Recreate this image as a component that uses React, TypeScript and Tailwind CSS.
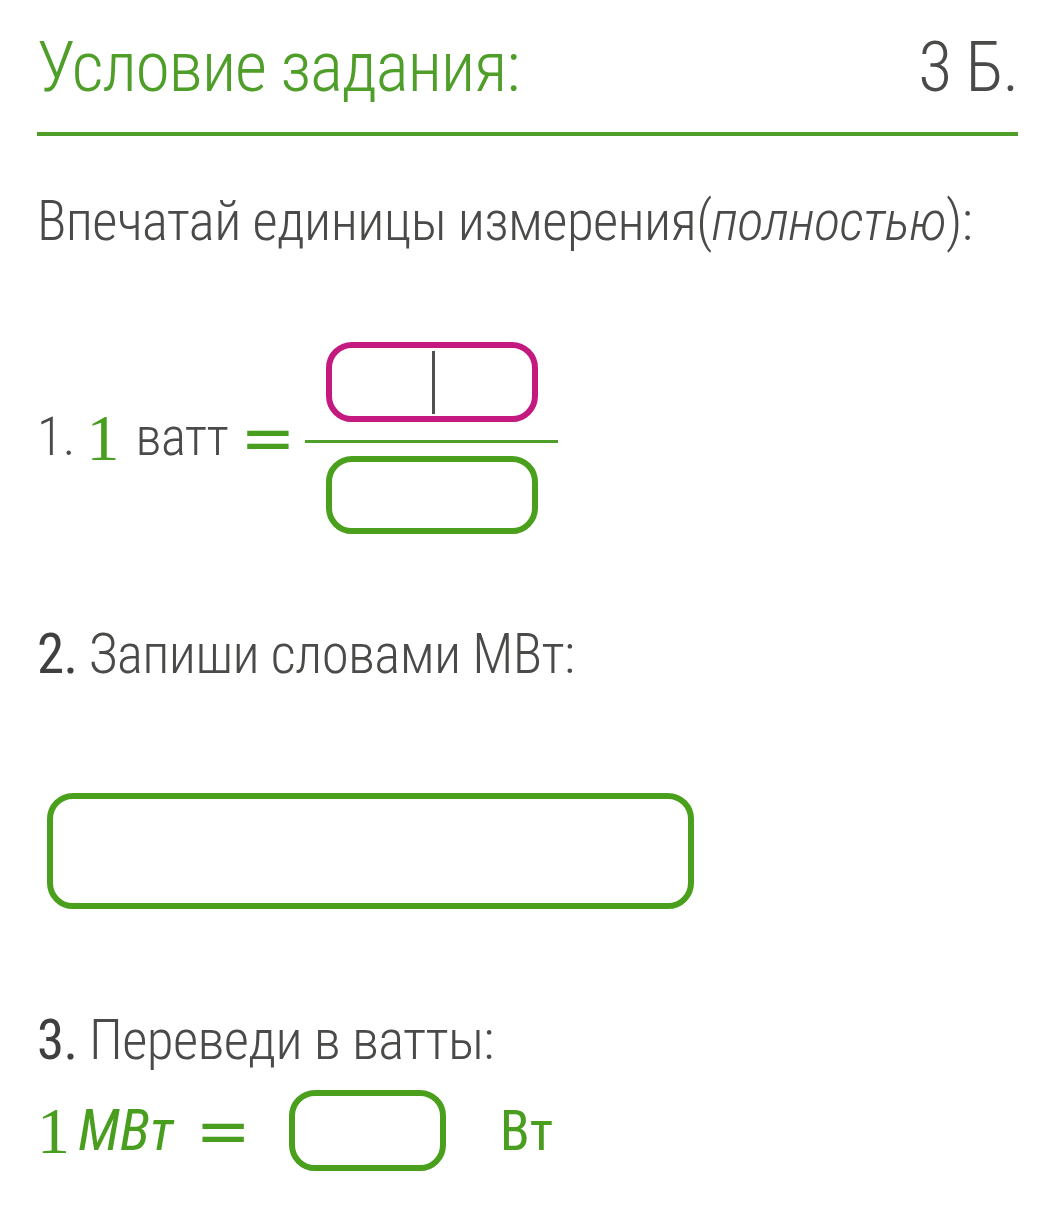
export default function App() {
  return (
    <div className="min-h-[1205px] w-[1047px] bg-white text-[#4a4a48] font-['Roboto',sans-serif] font-light font-stretch-[81%]">
      <div className="pl-[37px] pr-[29px] pt-[22px]">
        <div className="flex items-baseline justify-between pb-[20px] border-b-[4px] border-[#4f9e2a]">
          <h1 className="text-[70px] leading-[90px] text-[#4f9e2a] font-light tracking-[-1.3px]">Условие задания:</h1>
          <span className="text-[70px] leading-[90px] font-light tracking-[-1.3px]">3 Б.</span>
        </div>

        <p className="mt-[50px] text-[55px] leading-[70px] whitespace-nowrap tracking-[-0.65px]">
          Впечатай единицы измерения(<i>полностью</i>):
        </p>

        {/* 1 */}
        <div className="mt-[86px] flex items-center">
          <span className="text-[53px]">1.</span>
          <span className="ml-[11px] text-[66px] leading-none text-[#4a9e1f] font-['Liberation_Serif',serif] font-normal">1</span>
          <span className="ml-[16px] text-[53px] tracking-[-0.6px]">ватт</span>
          <span className="ml-[12px] text-[66px] leading-none text-[#4a9e1f] font-['DejaVu_Serif',serif] font-stretch-normal">=</span>
          <div className="ml-[10px] flex flex-col items-center w-[253px]">
            <div className="relative w-[212px] h-[80px] rounded-[26px] border-[6px] border-[#c4197e]">
              <div className="absolute left-[100px] top-[3px] w-[3px] h-[63px] bg-[#505050]" />
            </div>
            <div className="mt-[18px] h-[3px] w-full bg-[#4f9e2a]" />
            <div className="mt-[13px] w-[212px] h-[78px] rounded-[26px] border-[6px] border-[#4aa01c]" />
          </div>
        </div>

        {/* 2 */}
        <p className="mt-[85px] text-[55px] leading-[70px] tracking-[-0.65px]">
          <span className="font-normal text-[#3f3f3d]">2.</span> Запиши словами МВт:
        </p>
        <div className="mt-[104px] ml-[10px] w-[647px] h-[116px] rounded-[26px] border-[6px] border-[#4aa01c]" />

        {/* 3 */}
        <p className="mt-[96px] text-[55px] leading-[70px] tracking-[-0.65px]">
          <span className="font-normal text-[#3f3f3d]">3.</span> Переведи в ватты:
        </p>
        <div className="mt-[13px] flex items-center text-[#4a9e1f]">
          <span className="text-[66px] leading-none font-['Liberation_Serif',serif]">1</span>
          <span className="ml-[8px] text-[57px] italic font-normal">МВт</span>
          <span className="ml-[22px] text-[66px] leading-none font-['DejaVu_Serif',serif] font-stretch-normal">=</span>
          <div className="ml-[38px] w-[157px] h-[81px] rounded-[26px] border-[6px] border-[#4aa01c]" />
          <span className="ml-[54px] text-[55px] font-normal">Вт</span>
        </div>
      </div>
    </div>
  );
}
